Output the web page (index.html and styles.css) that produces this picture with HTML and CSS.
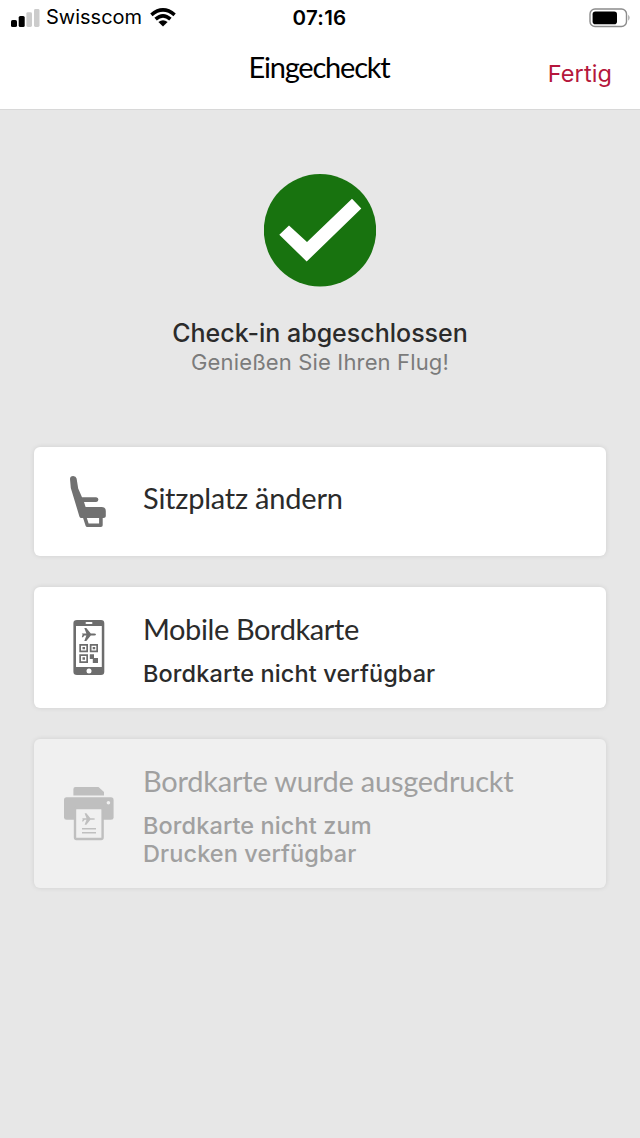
FILE: index.html
```html
<!DOCTYPE html>
<html lang="de">
<head>
    <meta charset="UTF-8" />
    <meta name="viewport" content="width=device-width, initial-scale=1.0" />
    <title>Eingecheckt</title>
    <link rel="stylesheet" href="styles.css">
</head>
<body>
    <header class="top">
        <div class="status-bar">
            <div class="carrier">
                <svg class="signal" width="29" height="18" viewBox="0 0 29 18">
                    <rect x="0" y="11" width="6" height="7" rx="1.6" />
                    <rect x="7.7" y="7" width="6" height="11" rx="1.6" />
                    <rect x="15.4" y="3.2" width="5.6" height="14.8" rx="1.4" fill="#ccc" />
                    <rect x="23" y="0" width="5.5" height="18" rx="1.4" fill="#ccc" />
                </svg>
                <span class="carrier-name">Swisscom</span>
                <svg class="wifi" width="26" height="19" viewBox="0 0 26 19">
                    <path d="M1.4 6.8Q13 -3 24.6 6.8M5.6 11.2Q13 4.6 20.4 11.2" fill="none" stroke="#000" stroke-width="3.6" />
                    <path d="M8.4 14Q13 10.4 17.6 14L13 18.6Z" />
                </svg>
            </div>
            <div class="time">07:16</div>
            <svg class="battery" width="42" height="20" viewBox="0 0 42 20">
                <rect x="1" y="1" width="36.5" height="17.5" rx="5" fill="none" stroke="#8c8c8c" stroke-width="1.4" />
                <rect x="3.6" y="3.4" width="24.4" height="12.8" rx="2.8" />
                <path d="M39.4 6.8Q41.6 9.8 39.4 12.8Z" fill="#8c8c8c" />
            </svg>
        </div>
        <div class="nav">
            <h1>Eingecheckt</h1>
            <a class="done">Fertig</a>
        </div>
    </header>

    <main>
        <section class="confirmation">
            <svg class="check" width="112" height="113" viewBox="0 0 112 113">
                <circle cx="56" cy="56.3" r="56.2" fill="#18730f" />
                <path d="M15.3 60.7L25 51.4L43 68L88 24.7L97.3 34.5L42.7 87.5Z" fill="#fff" />
            </svg>
            <h2>Check-in abgeschlossen</h2>
            <p>Genießen Sie Ihren Flug!</p>
        </section>

        <div class="cards">
            <div class="card card-seat">
                <svg class="icon" width="80" height="75" viewBox="0 0 80 75" fill="#717171">
                    <path d="M20 14Q20 11 23.2 11Q26 11 26.6 13.6L28.2 23.5L32 32.2H46.2Q48.4 32.4 48.4 34.6T46.2 37H34L35.6 42H51.5Q55.8 42 55.8 46V51.2Q55.8 53 53.4 53H31.5Q29.8 53 29.4 51.4L20.8 23Z" />
                    <path d="M34.8 52.5L37.3 60.2H50.9V52.5" fill="none" stroke="#717171" stroke-width="3.6" stroke-linejoin="round" />
                </svg>
                <div class="card-text">
                    <h3>Sitzplatz ändern</h3>
                </div>
            </div>

            <div class="card card-mobile">
                <svg class="icon" width="80" height="75" viewBox="0 0 80 75" fill="#6d6d6d">
                    <path fill-rule="evenodd" d="M27 10H51Q54.3 10 54.3 13.3V61.7Q54.3 65 51 65H27Q23.4 65 23.4 61.7V13.3Q23.4 10 27 10ZM26 16V57H51.8V16Z" />
                    <rect x="35.5" y="12" width="7" height="2" rx="1" fill="#fff" />
                    <circle cx="39" cy="61" r="2.5" fill="#fff" />
                    <path d="M31.8 23.5H36.4L34.3 18H36.3L40.8 23.5H44.2Q46 23.6 46 24.5T44.2 25.5H40.8L36.3 31H34.3L36.4 25.5H34.4L33 27.2H31.8L32.6 24.5Z" />
                    <path fill-rule="evenodd" d="M29.3 34H38V42.3H29.3ZM31 35.7V40.6H36.3V35.7ZM39.8 34H48V42.3H39.8ZM41.5 35.7V40.6H46.3V35.7ZM29.3 44.3H38V53H29.3ZM31 46V51.3H36.3V46Z" />
                    <path d="M32.5 37H35V39.3H32.5ZM42.7 37H45.2V39.3H42.7ZM32.5 47.3H35V49.8H32.5ZM39.8 44.3H44V48H48V53H42.8V49H39.8Z" />
                </svg>
                <div class="card-text">
                    <h3>Mobile Bordkarte</h3>
                    <p>Bordkarte nicht verfügbar</p>
                </div>
            </div>

            <div class="card card-print disabled">
                <svg class="icon" width="80" height="75" viewBox="0 0 80 75" fill="#bfbfbf">
                    <path d="M23.4 20.5V14Q23.4 12 25.4 12H48.5L54 17V20.5Z" />
                    <path d="M16.5 22.3H61Q63.6 22.3 63.6 25V42.5Q63.6 44.8 61 44.8H16.5Q14 44.8 14 42.5V25Q14 22.3 16.5 22.3Z" />
                    <circle cx="58.4" cy="27.8" r="1.8" fill="#f0f0f0" />
                    <rect x="25" y="33" width="27.6" height="31" rx="1.5" fill="#f0f0f0" stroke="#bfbfbf" stroke-width="2.4" />
                    <path d="M32 43.2H36.5L34.6 38.2H36.4L40.4 43.2H43.4Q45 43.3 45 44T43.4 44.8H40.4L36.4 49.8H34.6L36.5 44.8H34.6L33.2 46.4H32L32.8 44Z" />
                    <path d="M32 53H46V54.6H32ZM32 57H46V58.6H32Z" />
                </svg>
                <div class="card-text">
                    <h3>Bordkarte wurde ausgedruckt</h3>
                    <p>Bordkarte nicht zum<br>Drucken verfügbar</p>
                </div>
            </div>
        </div>
    </main>
</body>
</html>
```
FILE: styles.css
```css
* {
    box-sizing: border-box;
}
body {
    margin: 0;
    min-height: 1138px;
    background-color: #e7e7e7;
    color: #2b2b2b;
    font-family: Inter, "Liberation Sans", sans-serif;
}
h1,
h2,
h3,
p {
    margin: 0;
}
h1,
h3 {
    font-family: Lato, "Open Sans", sans-serif;
    font-weight: 400;
    white-space: nowrap;
}
.top {
    height: 110px;
    background-color: #fff;
    border-bottom: 1px solid #d8d8d8;
    color: #000;
}
.status-bar {
    display: grid;
    grid-template-columns: 1fr auto 1fr;
    align-items: center;
    height: 35px;
    padding: 0 9px 0 11px;
}
.carrier {
    display: flex;
    align-items: center;
}
.carrier-name {
    margin: 0 8px 0 6px;
    font-size: 20px;
    line-height: 35px;
}
.time {
    margin-right: 3px;
    font-size: 20.5px;
    font-weight: 600;
    letter-spacing: 0.3px;
}
.battery {
    justify-self: end;
}
.nav {
    display: grid;
    grid-template-columns: 1fr auto 1fr;
    align-items: start;
    padding: 14px 28px 0;
}
h1 {
    grid-column: 2;
    margin-right: 2px;
    font-size: 29px;
    line-height: 36px;
    letter-spacing: -1.2px;
}
.done {
    justify-self: end;
    margin-top: 7px;
    font-size: 23.5px;
    line-height: 36px;
    letter-spacing: 0.1px;
    color: #b5173c;
}
.confirmation {
    display: flex;
    flex-direction: column;
    align-items: center;
    height: 337px;
    padding-top: 64px;
}
h2 {
    margin-top: 30px;
    font-size: 25px;
    font-weight: 500;
    line-height: 32px;
}
.confirmation p {
    font-size: 22px;
    line-height: 26px;
    letter-spacing: 0.15px;
    color: #7b7b7b;
}
.cards {
    display: flex;
    flex-direction: column;
    gap: 31px;
    padding: 0 34px;
}
.card {
    display: flex;
    align-items: flex-start;
    background-color: #fff;
    border-radius: 6px;
    box-shadow: 0 0 5px rgba(0, 0, 0, 0.1);
}
.icon {
    flex: none;
    margin: 18px 13px 0 16px;
}
.card-text {
    padding-top: 23px;
}
.card-seat {
    height: 109px;
}
.card-seat .card-text {
    padding-top: 32px;
}
.card-mobile {
    height: 121px;
}
.card-mobile .icon {
    margin-top: 23px;
}
.card-print {
    height: 149px;
}
.card-print .icon {
    margin-top: 36px;
}
h3 {
    font-size: 29px;
    line-height: 37px;
    letter-spacing: -0.22px;
}
.card-mobile h3 {
    letter-spacing: -0.4px;
}
.card p {
    margin-top: 13px;
    font-size: 23.5px;
    font-weight: 500;
    line-height: 28px;
    letter-spacing: 0.1px;
}
.disabled {
    background-color: #f0f0f0;
    color: #a0a0a0;
}
```
